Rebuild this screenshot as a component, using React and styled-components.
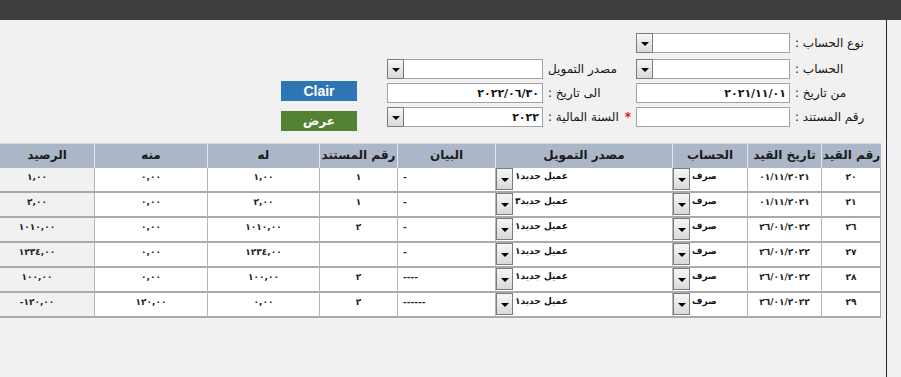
import React from "react";
import styled, { createGlobalStyle } from "styled-components";

const GlobalStyle = createGlobalStyle`
  html, body {
    margin: 0;
    padding: 0;
    background: #f1f1f1;
    font-family: "DejaVu Sans", "Liberation Sans", sans-serif;
  }
  * {
    box-sizing: border-box;
  }
`;

const TopBar = styled.div`
  height: 20px;
  background: #3e3e3e;
`;

const Main = styled.div`
  display: flex;
  min-height: calc(100vh - 20px);
`;

const Content = styled.div`
  width: 881px;
  margin-right: 5px;
  direction: rtl;
`;

const Divider = styled.div`
  width: 1px;
  background: #1f2b3a;
`;

const Form = styled.div`
  display: grid;
  grid-template-columns: 75px 154px 83px 156px 101px;
  grid-template-rows: 26px 24px 24px 20px;
  column-gap: 5px;
  align-items: start;
  padding: 13px 11px 0 0;
  height: 123px;
`;

const Label = styled.div`
  height: 20px;
  display: flex;
  align-items: center;
  justify-content: flex-end;
  font-size: 12px;
  color: #141414;
  white-space: nowrap;
  grid-column: ${(p) => p.$col};
  grid-row: ${(p) => p.$row};
`;

const Required = styled.span`
  color: #e01010;
  font-weight: bold;
  margin-left: 6px;
`;

const Field = styled.div`
  height: 20px;
  border: 1px solid #a3a3a3;
  background: #fff;
  display: flex;
  align-items: center;
  padding-right: 3px;
  font-size: 11px;
  font-weight: bold;
  color: #111;
  grid-column: ${(p) => p.$col};
  grid-row: ${(p) => p.$row};
`;

const FieldText = styled.span`
  flex: 1;
`;

const DropButton = styled.span`
  width: 17px;
  height: ${(p) => (p.$tall ? "22px" : "20px")};
  margin: -1px 0 -1px -1px;
  border: 1px solid #7c7c7c;
  background: linear-gradient(#f6f6f6, #d9d9d9);
  display: flex;
  align-items: center;
  justify-content: center;
  flex-shrink: 0;
  padding-top: 2px;
`;

const ButtonStack = styled.div`
  grid-column: 5;
  grid-row: 1 / span 4;
  justify-self: end;
  display: flex;
  flex-direction: column;
  gap: 10px;
  padding-top: 48px;
`;

const ActionButton = styled.button`
  width: 76px;
  height: 20px;
  border: none;
  padding: 0;
  background: ${(p) => p.$color};
  color: #fff;
  font-family: ${(p) =>
    p.$latin ? '"Liberation Sans", Arial, sans-serif' : '"DejaVu Sans", sans-serif'};
  font-size: ${(p) => (p.$latin ? "14px" : "12px")};
  font-weight: bold;
  cursor: pointer;
`;

const Table = styled.table`
  width: 881px;
  table-layout: fixed;
  border-collapse: separate;
  border-spacing: 0;
  border-top: 1px solid #d6d6d6;
`;

const HeadCell = styled.th`
  height: 24px;
  padding: 0 0 2px;
  background: #acb6c9;
  border-left: 1px solid #e4e7ec;
  font-size: 12px;
  font-weight: bold;
  color: #1b1b1b;
  text-align: center;
  white-space: nowrap;

  &:last-child {
    border-left: none;
  }
`;

const Cell = styled.td`
  height: 25px;
  padding: ${(p) => (p.$align === "left" ? "0 0 5px 5px" : "0 0 5px")};
  background: ${(p) => (p.$shade ? "#f1f1f1" : "#fff")};
  border-left: 1px solid #b5b5b5;
  border-bottom: 2px solid #aaaaaa;
  font-size: 9px;
  font-weight: bold;
  color: #222;
  text-align: ${(p) => p.$align || "center"};
  vertical-align: middle;
  white-space: nowrap;

  &:first-child {
    border-right: 1px solid #aaaaaa;
  }
  &:last-child {
    border-left: none;
    padding-right: 20px;
  }
`;

const SelectCell = styled.td`
  height: 25px;
  padding: 0;
  background: #fff;
  border-left: 1px solid #b5b5b5;
  border-bottom: 2px solid #aaaaaa;
  vertical-align: top;
`;

const CellSelect = styled.div`
  display: flex;
  direction: ltr;
  height: 23px;
  padding: 1px 0 0 1px;
`;

const CellSelectText = styled.span`
  direction: rtl;
  padding: 2px 0 0 2px;
  font-size: 9px;
  font-weight: bold;
  color: #111;
`;

const Ltr = styled.span`
  direction: ltr;
  unicode-bidi: isolate;
`;

const Triangle = () => (
  <svg width="8" height="4" viewBox="0 0 8 4">
    <path d="M0 0h8L4 4z" fill="#000" />
  </svg>
);

const SelectField = ({ col, row, children }) => (
  <Field $col={col} $row={row}>
    <FieldText>{children}</FieldText>
    <DropButton>
      <Triangle />
    </DropButton>
  </Field>
);

const columns = [
  { title: "رقم القيد", width: 60 },
  { title: "تاريخ القيد", width: 74 },
  { title: "الحساب", width: 75 },
  { title: "مصدر التمويل", width: 177 },
  { title: "البيان", width: 98 },
  { title: "رقم المستند", width: 78 },
  { title: "له", width: 112 },
  { title: "منه", width: 113 },
  { title: "الرصيد", width: 94 },
];

const rows = [
  { id: "٢٠", date: "٠١/١١/٢٠٢١", src: "عميل جديد١", desc: "-", doc: "١", credit: "١,٠٠", debit: "٠,٠٠", bal: "١,٠٠" },
  { id: "٢١", date: "٠١/١١/٢٠٢١", src: "عميل جديد٣", desc: "-", doc: "١", credit: "٢,٠٠", debit: "٠,٠٠", bal: "٢,٠٠" },
  { id: "٢٦", date: "٢٦/٠١/٢٠٢٢", src: "عميل جديد١", desc: "-", doc: "٢", credit: "١٠١٠,٠٠", debit: "٠,٠٠", bal: "١٠١٠,٠٠" },
  { id: "٢٧", date: "٢٦/٠١/٢٠٢٢", src: "عميل جديد١", desc: "-", doc: "", credit: "١٢٣٤,٠٠", debit: "٠,٠٠", bal: "١٢٣٤,٠٠" },
  { id: "٢٨", date: "٢٦/٠١/٢٠٢٢", src: "عميل جديد١", desc: "----", doc: "٢", credit: "١٠٠,٠٠", debit: "٠,٠٠", bal: "١٠٠,٠٠" },
  { id: "٢٩", date: "٢٦/٠١/٢٠٢٢", src: "عميل جديد١", desc: "------", doc: "٢", credit: "٠,٠٠", debit: "١٢٠,٠٠", bal: "-١٢٠,٠٠" },
];

const RowSelect = ({ children }) => (
  <SelectCell>
    <CellSelect>
      <DropButton $tall>
        <Triangle />
      </DropButton>
      <CellSelectText>{children}</CellSelectText>
    </CellSelect>
  </SelectCell>
);

const App = () => {
  return (
    <>
      <GlobalStyle />
      <TopBar />
      <Main>
        <Content>
          <Form>
            <Label $col={1} $row={1}>نوع الحساب :</Label>
            <SelectField col={2} row={1} />

            <Label $col={1} $row={2}>الحساب :</Label>
            <SelectField col={2} row={2} />
            <Label $col={3} $row={2}>مصدر التمويل</Label>
            <SelectField col={4} row={2} />

            <Label $col={1} $row={3}>من تاريخ :</Label>
            <Field $col={2} $row={3}>٢٠٢١/١١/٠١</Field>
            <Label $col={3} $row={3}>الى تاريخ :</Label>
            <Field $col={4} $row={3}>٢٠٢٢/٠٦/٣٠</Field>

            <Label $col={1} $row={4}>رقم المستند :</Label>
            <Field $col={2} $row={4} />
            <Label $col={3} $row={4}>
              <Required>*</Required>السنة المالية :
            </Label>
            <SelectField col={4} row={4}>٢٠٢٢</SelectField>

            <ButtonStack>
              <ActionButton $color="#2e75b6" $latin>Clair</ActionButton>
              <ActionButton $color="#548235">عرض</ActionButton>
            </ButtonStack>
          </Form>

          <Table>
            <colgroup>
              {columns.map((c) => (
                <col key={c.title} style={{ width: c.width }} />
              ))}
            </colgroup>
            <thead>
              <tr>
                {columns.map((c) => (
                  <HeadCell key={c.title}>{c.title}</HeadCell>
                ))}
              </tr>
            </thead>
            <tbody>
              {rows.map((r) => (
                <tr key={r.id}>
                  <Cell>{r.id}</Cell>
                  <Cell>{r.date}</Cell>
                  <RowSelect>صرف</RowSelect>
                  <RowSelect>{r.src}</RowSelect>
                  <Cell $align="left">{r.desc}</Cell>
                  <Cell>{r.doc}</Cell>
                  <Cell>{r.credit}</Cell>
                  <Cell>{r.debit}</Cell>
                  <Cell $shade>
                    <Ltr>{r.bal}</Ltr>
                  </Cell>
                </tr>
              ))}
            </tbody>
          </Table>
        </Content>
        <Divider />
      </Main>
    </>
  );
};

export default App;
